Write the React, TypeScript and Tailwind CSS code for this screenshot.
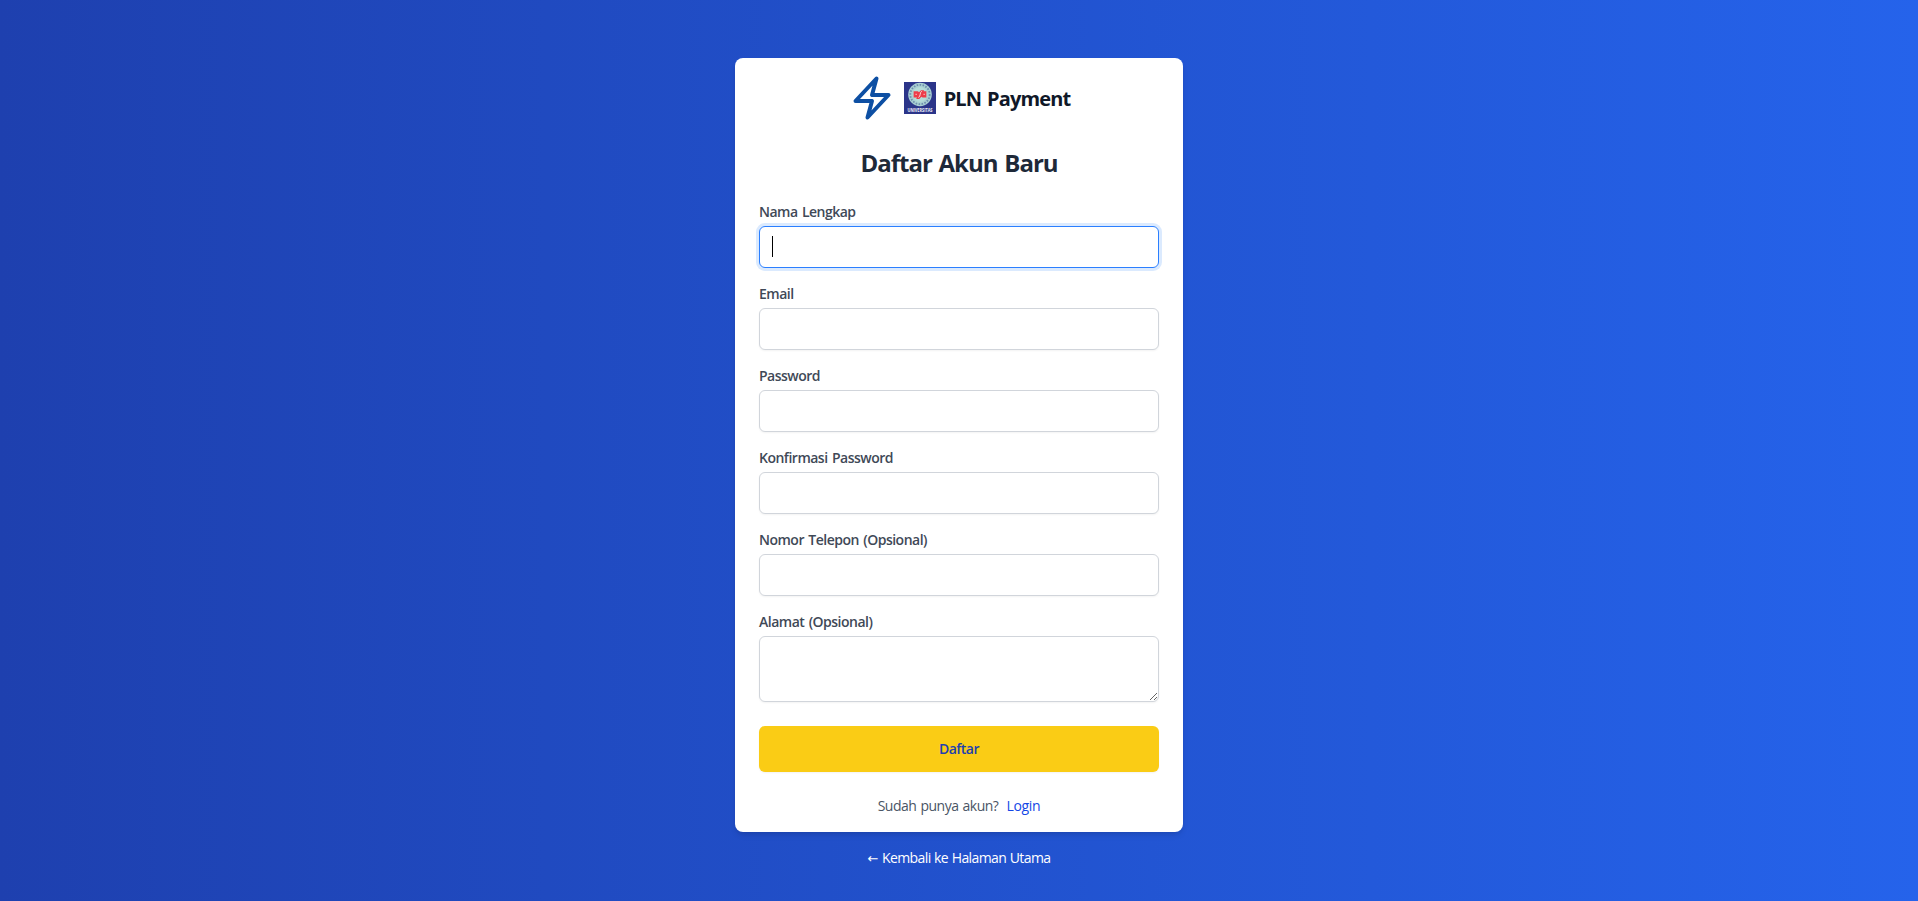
import React from "react";

const fields = [
  { id: "email", label: "Email", type: "email" },
  { id: "password", label: "Password", type: "password" },
  { id: "confirm", label: "Konfirmasi Password", type: "password" },
  { id: "phone", label: "Nomor Telepon (Opsional)", type: "text" },
];

const labelClass =
  "block text-sm leading-5 font-semibold tracking-[-0.5px] [word-spacing:1.2px] text-[#3f4957]";
const inputClass =
  "mt-1 block h-[42px] w-full rounded-md border border-[#d1d5db] bg-white px-3 text-base shadow-xs outline-none";

function CampusLogo() {
  return (
    <svg className="size-8 overflow-visible" viewBox="0 0 32 32" aria-hidden="true">
      <rect width="32" height="32" fill="#2b3589" />
      <circle cx="16" cy="12.5" r="11.8" fill="#a9d0d2" />
      <circle cx="16" cy="12.5" r="9.7" fill="none" stroke="#6d8fae" strokeWidth="1.8" strokeDasharray="1.6 1.4" />
      <circle cx="16" cy="12.5" r="7.4" fill="#b5dcd8" />
      <path d="M9.6 9.2h4.2l1.2 1 2-2h3.2l-.6 1h2.8v6.4h-3.8l-1.2-.9-2.2 2.3h-3l.8-1.4H9.6z" fill="#ee3b49" />
      <path d="M17.8 9.2c-2.4 1.4-.8 4.6-3.3 6.4" fill="none" stroke="#fbe6e4" strokeWidth="0.9" />
      <path d="M11.4 12.3h1.6M19.4 12.3h1.6" fill="none" stroke="#f6c9c8" strokeWidth="0.9" />
      <text x="16" y="30.2" textAnchor="middle" textLength="25" lengthAdjust="spacingAndGlyphs" fontSize="4.8" fontWeight="700" fill="#f1f2fa">
        UNIVERSITAS
      </text>
    </svg>
  );
}

export default function App() {
  return (
    <div className="flex min-h-screen flex-col items-center bg-[linear-gradient(to_right,#1e40af,#2563eb)] pt-[58px] font-['Open_Sans','Noto_Sans',sans-serif]">
      <main className="w-[448px] rounded-lg bg-white px-6 py-4 shadow-md">
        <div className="flex items-center justify-center gap-2">
          <svg className="size-12" viewBox="0 0 24 24" fill="none" stroke="#0d4fa3" strokeWidth="2" strokeLinecap="round" strokeLinejoin="round">
            <path d="m3.75 13.5 10.5-11.25L12 10.5h8.25L9.75 21.75 12 13.5H3.75z" />
          </svg>
          <CampusLogo />
          <span className="pt-0.5 text-[20px] font-bold tracking-[-0.86px] [word-spacing:1.5px] whitespace-nowrap text-gray-900">PLN Payment</span>
        </div>
        <h1 className="mt-6 pt-px text-center text-[24px] leading-8 font-bold tracking-[-1px] [word-spacing:1.5px] text-gray-800">Daftar Akun Baru</h1>
        <form className="mt-[23px] flex flex-col gap-4">
          <div>
            <label htmlFor="name" className={labelClass}>Nama Lengkap</label>
            <div className="mt-1 flex h-[42px] items-center rounded-md border border-blue-500 bg-white px-3 ring-3 ring-blue-100">
              <span className="-mt-0.5 h-[21px] w-px bg-black" />
            </div>
          </div>
          {fields.map((f) => (
            <div key={f.id}>
              <label htmlFor={f.id} className={labelClass}>{f.label}</label>
              <input id={f.id} type={f.type} className={inputClass} />
            </div>
          ))}
          <div>
            <label htmlFor="address" className={labelClass}>Alamat (Opsional)</label>
            <textarea id="address" className="mt-1 block h-[66px] w-full resize-y rounded-md border border-[#d1d5db] bg-white px-3 py-2 shadow-xs outline-none" />
          </div>
          <button type="button" className="mt-2 h-[46px] rounded-md bg-[#facc15] text-sm font-semibold tracking-[-0.55px] text-[#1e40af] shadow-xs">Daftar</button>
        </form>
        <p className="mt-6 flex justify-center gap-2 text-sm leading-5 tracking-[-0.48px] [word-spacing:0.8px] text-gray-600">
          <span>Sudah punya akun?</span>
          <a href="#" className="tracking-[-0.3px] text-blue-700">Login</a>
        </p>
      </main>
      <a href="#" className="mt-4 text-sm leading-5 font-medium tracking-[-0.6px] [word-spacing:0.5px] text-white">
        <span className="font-['DejaVu_Sans'] text-[13px] font-normal tracking-normal">←</span> Kembali ke Halaman Utama
      </a>
    </div>
  );
}
